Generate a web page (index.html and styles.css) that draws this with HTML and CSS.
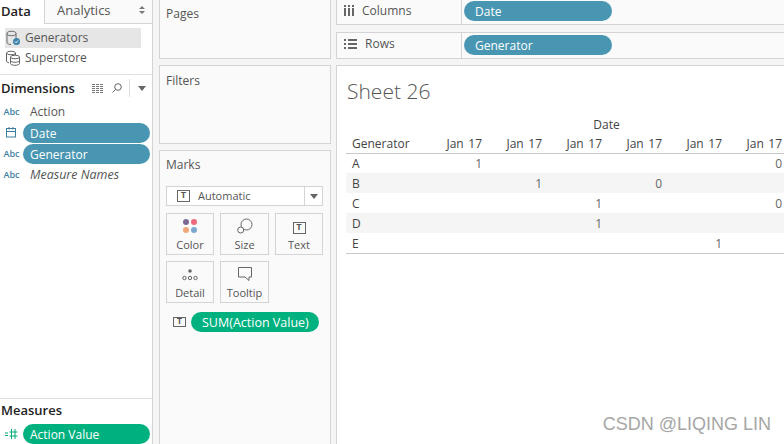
FILE: index.html
```html
<!DOCTYPE html>
<html lang="en">
<head>
<meta charset="utf-8">
<title>Sheet 26</title>
<link rel="stylesheet" href="styles.css">
</head>
<body>
<div class="app">
  <aside class="data-pane">
    <div class="tabs">
      <div class="tab tab-active">Data</div>
      <div class="tab tab-idle"><span>Analytics</span>
        <svg class="updown" width="6" height="8" viewBox="0 0 6 8"><path d="M3 0L6 3H0zM3 8L0 5h6z" fill="#777"/></svg>
      </div>
    </div>
    <div class="sources">
      <div class="source source-on">
        <svg width="16" height="16" viewBox="0 0 16 16" fill="none" stroke="#666"><ellipse cx="6.500" cy="3.500" rx="4.500" ry="2.200"/><path d="M2 3.500v9c0 1.200 2 2 4 2M11 3.500V8"/><circle cx="11.500" cy="11.500" r="3.500" fill="#3d84ab" stroke="none"/><path d="M9.800 11.500l1.300 1.300 2-2.300" stroke="#fff"/></svg>
        <span>Generators</span>
      </div>
      <div class="source">
        <svg width="16" height="16" viewBox="0 0 16 16" fill="none" stroke="#666"><ellipse cx="6" cy="3" rx="4.500" ry="1.800"/><path d="M1.500 3v8c0 1 1 1.500 2.500 1.800M10.500 3v2"/><ellipse cx="10" cy="7" rx="4.500" ry="1.800" fill="#fff"/><path d="M5.500 7v6.500c0 1 2 1.800 4.500 1.800s4.500-.8 4.500-1.800V7M5.500 10.500c0 1 2 1.800 4.500 1.800s4.500-.8 4.500-1.800"/></svg>
        <span>Superstore</span>
      </div>
    </div>
    <div class="section-head dims">
      <strong>Dimensions</strong>
      <div class="head-tools">
        <svg width="12" height="9" viewBox="0 0 12 9" stroke="#777" fill="none"><path d="M0 .5h12M0 2.500h12M0 4.500h12M0 6.500h12M0 8.500h12" stroke-dasharray="3 1"/></svg>
        <svg class="tool-search" width="10" height="10" viewBox="0 0 10 10" stroke="#666" fill="none"><circle cx="6" cy="4" r="3.300"/><path d="M3.600 6.400L.5 9.500"/></svg>
        <i class="tool-sep"></i>
        <svg width="8" height="5" viewBox="0 0 8 5"><path d="M0 0h8L4 5z" fill="#666"/></svg>
      </div>
    </div>
    <ul class="fields">
      <li class="field"><span class="type">Abc</span><span class="field-name">Action</span></li>
      <li class="field"><span class="type"><svg width="11" height="11" viewBox="0 0 11 11" fill="none" stroke="#3d7f9f"><rect x=".5" y="1.500" width="9" height="8.500"/><path d="M.5 4.500h9M3 0v2.500M7 0v2.500"/></svg></span><span class="pill pill-blue">Date</span></li>
      <li class="field"><span class="type">Abc</span><span class="pill pill-blue">Generator</span></li>
      <li class="field"><span class="type">Abc</span><span class="field-name italic">Measure Names</span></li>
    </ul>
    <div class="measures">
      <div class="measures-head"><strong>Measures</strong></div>
      <div class="field measure-row">
        <span class="type"><svg width="14" height="10" viewBox="0 0 14 10" fill="none" stroke="#00a878"><path d="M0 4h3M0 6.500h3M6.500 0v10M10 0v10M4.500 3h8M4.500 7h8"/></svg></span>
        <span class="pill pill-green">Action Value</span>
      </div>
    </div>
  </aside>

  <section class="cards">
    <div class="card card-pages">Pages</div>
    <div class="card card-filters">Filters</div>
    <div class="card card-marks">
      <div class="marks-title">Marks</div>
      <div class="mark-select">
        <span class="t-box">T</span>
        <span class="mark-type">Automatic</span>
        <span class="mark-arrow"><svg width="8" height="5" viewBox="0 0 8 5"><path d="M0 0h8L4 5z" fill="#666"/></svg></span>
      </div>
      <div class="mark-grid">
        <div class="mark-btn">
          <svg width="16" height="16" viewBox="0 0 16 16"><circle cx="4" cy="4" r="3" fill="#7d6a94"/><circle cx="12" cy="4" r="3" fill="#ee6a7c"/><circle cx="4" cy="12" r="3" fill="#f0a679"/><circle cx="12" cy="12" r="3" fill="#7fa8d1"/></svg>
          <span>Color</span>
        </div>
        <div class="mark-btn">
          <svg width="16" height="16" viewBox="0 0 16 16" fill="none" stroke="#666"><circle cx="9.500" cy="6.500" r="5.500"/><circle cx="3.700" cy="12" r="3" fill="#fff"/></svg>
          <span>Size</span>
        </div>
        <div class="mark-btn">
          <span class="t-box">T</span>
          <span>Text</span>
        </div>
        <div class="mark-btn">
          <svg width="16" height="16" viewBox="0 0 16 16" fill="none" stroke="#666"><circle cx="8" cy="5" r="1.800" fill="#666" stroke="none"/><circle cx="2.500" cy="12" r="1.700"/><circle cx="8" cy="12" r="1.700"/><circle cx="13.500" cy="12" r="1.700"/></svg>
          <span>Detail</span>
        </div>
        <div class="mark-btn">
          <svg width="16" height="16" viewBox="0 0 16 16" fill="none" stroke="#666"><path d="M1.500 1.500h13v9.500h-2.500v3.500l-4-3.500h-6.500z"/></svg>
          <span>Tooltip</span>
        </div>
      </div>
      <div class="mark-field">
        <span class="t-box t-small">T</span>
        <span class="pill pill-green">SUM(Action Value)</span>
      </div>
    </div>
  </section>

  <main class="work">
    <div class="shelf shelf-columns">
      <div class="shelf-label">
        <svg width="10" height="11" viewBox="0 0 10 11" fill="#666"><path d="M0 3h2v8H0zM4 3h2v8H4zM8 3h2v8H8zM0 0h2v2H0zM4 0h2v2H4zM8 0h2v2H8z"/></svg>
        <span>Columns</span>
      </div>
      <div class="shelf-body"><span class="pill pill-blue shelf-pill">Date</span></div>
    </div>
    <div class="shelf shelf-rows">
      <div class="shelf-label">
        <svg width="13" height="10" viewBox="0 0 13 10" fill="#666"><path d="M0 0h2v2H0zM4 0h9v2H4zM0 4h2v2H0zM4 4h9v2H4zM0 8h2v2H0zM4 8h9v2H4z"/></svg>
        <span>Rows</span>
      </div>
      <div class="shelf-body"><span class="pill pill-blue shelf-pill">Generator</span></div>
    </div>
    <div class="view">
      <h1 class="sheet-title">Sheet 26</h1>
      <table class="crosstab">
        <colgroup><col class="col-head"><col class="col-val"><col class="col-val"><col class="col-val"><col class="col-val"><col class="col-val"><col class="col-val"></colgroup>
        <thead>
          <tr><th class="row-head"></th><th colspan="6" class="date-head">Date</th></tr>
          <tr class="head-row"><th class="row-head">Generator</th><th>Jan 17</th><th>Jan 17</th><th>Jan 17</th><th>Jan 17</th><th>Jan 17</th><th>Jan 17</th></tr>
        </thead>
        <tbody>
          <tr><td class="row-head">A</td><td>1</td><td></td><td></td><td></td><td></td><td>0</td></tr>
          <tr class="band"><td class="row-head">B</td><td></td><td>1</td><td></td><td>0</td><td></td><td></td></tr>
          <tr><td class="row-head">C</td><td></td><td></td><td>1</td><td></td><td></td><td>0</td></tr>
          <tr class="band"><td class="row-head">D</td><td></td><td></td><td>1</td><td></td><td></td><td></td></tr>
          <tr><td class="row-head">E</td><td></td><td></td><td></td><td></td><td>1</td><td></td></tr>
        </tbody>
      </table>
      <div class="watermark">CSDN @LIQING LIN</div>
    </div>
  </main>
</div>
</body>
</html>
```

FILE: styles.css
```css
* { box-sizing: border-box; }
html, body { margin: 0; height: 100%; }
body { width: 784px; height: 444px; overflow: hidden; background: #f5f5f5; font-family: "Open Sans", "Noto Sans", sans-serif; font-size: 12px; color: #555; }
.app { display: flex; width: 784px; height: 444px; overflow: hidden; }

.data-pane { width: 153px; flex: none; background: #fff; border-right: 1px solid #d4d4d4; display: flex; flex-direction: column; }
.tabs { display: flex; height: 24px; flex: none; }
.tab { display: flex; align-items: center; font-size: 13px; padding-bottom: 3px; }
.tab-active { width: 45px; padding-left: 1px; font-weight: 600; color: #222; border-right: 1px solid #d4d4d4; }
.tab-idle { flex: 1; justify-content: space-between; padding: 0 7px 3px 12px; background: #fafafa; border-bottom: 1px solid #d4d4d4; color: #555; }
.sources { padding: 4px 11px 0 5px; height: 51px; border-bottom: 1px solid #e0e0e0; flex: none; }
.source { display: flex; align-items: center; gap: 4px; height: 20px; font-size: 12px; }
.source span { padding-bottom: 1px; }
.source-on { background: #e6e6e6; }
.section-head { display: flex; align-items: center; justify-content: space-between; }
.dims { height: 26px; padding: 0 6px 0 1px; flex: none; }
.section-head strong, .measures-head strong { font-size: 13px; font-weight: 600; color: #222; }
.head-tools { display: flex; align-items: center; gap: 8px; }
.tool-search { margin-right: -1px; }
.tool-sep { width: 1px; height: 18px; background: #ddd; }
.fields { list-style: none; margin: 0; padding: 0; }
.field { display: flex; align-items: flex-end; height: 21px; }
.type { width: 23px; height: 100%; flex: none; display: flex; justify-content: center; align-items: center; font-size: 9px; font-weight: 600; color: #3d7f9f; }
.field-name { align-self: center; padding-left: 7px; color: #555; }
.italic { font-style: italic; font-size: 12.500px; }
.pill { display: flex; align-items: center; height: 20px; border-radius: 10px; color: #fff; padding-left: 7px; font-size: 12px; }
.field .pill { width: 127px; }
.pill-blue { background: #4996b2; }
.pill-green { background: #00b180; }
.measures { margin-top: auto; border-top: 1px solid #e0e0e0; }
.measures-head { height: 25px; display: flex; align-items: center; padding: 0 0 3px 1px; }
.measure-row { height: 20px; margin-bottom: 0; }

.cards { width: 183px; flex: none; display: flex; flex-direction: column; gap: 6px; padding: 0 5px 0 6px; }
.card { background: #fafafa; border: 1px solid #d4d4d4; padding: 5px 6px; font-size: 12px; color: #555; }
.card-pages { height: 59px; border-top: 0; }
.card-filters { height: 79px; padding-top: 6px; }
.card-marks { flex: 1; padding: 5px 6px 0; border-bottom: 0; }
.marks-title { height: 30px; }
.mark-select { display: flex; align-items: center; height: 20px; background: #fff; border: 1px solid #d4d4d4; padding-left: 10px; width: 157px; }
.t-box { width: 13px; height: 12px; flex: none; border: 1px solid #666; font-family: "Liberation Mono", monospace; font-size: 9px; font-weight: 700; line-height: 10px; text-align: center; color: #555; display: block; }
.t-small { height: 10px; line-height: 8px; }
.mark-type { flex: 1; padding: 0 0 2px 8px; font-size: 11px; }
.mark-arrow { width: 18px; height: 100%; border-left: 1px solid #d4d4d4; display: flex; align-items: center; justify-content: center; }
.mark-grid { display: grid; grid-template-columns: 48px 49px 48px; grid-auto-rows: 42px; column-gap: 6px; row-gap: 6px; margin-top: 7px; }
.mark-btn { background: #fafafa; border: 1px solid #d4d4d4; display: flex; flex-direction: column; align-items: center; justify-content: flex-end; gap: 3px; padding-bottom: 2px; font-size: 11px; color: #555; }
.mark-field { display: flex; align-items: center; margin-top: 9px; gap: 5px; padding-left: 7px; }
.mark-field .pill { width: 128px; padding-left: 11px; font-size: 12.500px; }

.work { flex: 1; min-width: 0; display: flex; flex-direction: column; }
.shelf { display: flex; background: #fafafa; border: 1px solid #d4d4d4; border-right: 0; flex: none; }
.shelf-columns { height: 25px; margin-bottom: 7px; border-top: 0; }
.shelf-columns .shelf-body { padding-bottom: 2px; }
.shelf-columns .shelf-label { padding-bottom: 3px; }
.shelf-rows { height: 27px; margin-bottom: 6px; }
.shelf-rows .shelf-body { padding-bottom: 1px; }
.shelf-rows .shelf-label { padding-bottom: 4px; }
.shelf-label { width: 125px; flex: none; display: flex; align-items: center; gap: 8px; padding-left: 7px; border-right: 1px solid #d4d4d4; }
.shelf-body { flex: 1; display: flex; align-items: center; padding-left: 2px; }
.shelf-pill { width: 148px; padding-left: 11px; }

.view { flex: 1; min-height: 0; position: relative; background: #fff; border: 1px solid #d4d4d4; border-right: 0; border-bottom: 0; padding: 0 0 0 9px; }
.sheet-title { margin: 0; height: 48px; padding: 11px 0 0 1px; font-size: 21px; font-weight: 300; line-height: 28px; color: #555; }
.crosstab { border-collapse: separate; border-spacing: 0; table-layout: fixed; width: 438px; font-size: 12px; color: #444; }
.col-head { width: 78px; }
.col-val { width: 60px; }
.crosstab th { font-weight: 400; text-align: right; padding: 0 2px 0 0; height: 20px; }
.head-row th { word-spacing: 1.500px; border-bottom: 1px solid #c9c9c9; }
.crosstab th.row-head, .crosstab td.row-head { text-align: left; padding: 0 0 0 6px; color: #444; }
.crosstab th.date-head { text-align: center; padding: 0 0 0 5px; }
.crosstab td { height: 20px; padding: 0 2px 0 0; text-align: right; color: #666; }
.crosstab tbody tr:first-child td { height: 19px; }
.crosstab tbody tr:last-child td { height: 21px; border-bottom: 1px solid #c9c9c9; }
.band td { background: #f5f5f5; }
.watermark { position: absolute; right: 13px; top: 348px; font-family: "Liberation Sans", sans-serif; font-size: 18px; line-height: 20px; color: #a6a6a6; white-space: nowrap; }
```
